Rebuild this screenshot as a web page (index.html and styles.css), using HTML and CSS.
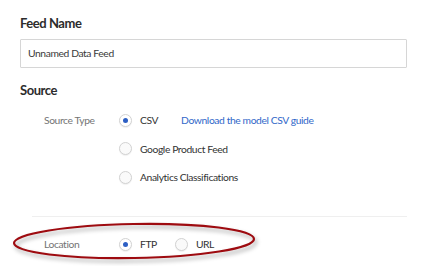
FILE: index.html
```html
<!DOCTYPE html>
<html>
<head>
<meta charset="utf-8">
<link rel="stylesheet" href="styles.css">
</head>
<body>
<div class="page">
  <h2 class="heading">Feed Name</h2>
  <div class="input">Unnamed Data Feed</div>
  <h2 class="heading source">Source</h2>
  <div class="field">
    <div class="label">Source Type</div>
    <div class="options">
      <div class="opt"><span class="radio on"></span><span>CSV</span><a class="link">Download the model CSV guide</a></div>
      <div class="opt"><span class="radio"></span><span>Google Product Feed</span></div>
      <div class="opt"><span class="radio"></span><span>Analytics Classifications</span></div>
    </div>
  </div>
  <div class="sep"></div>
  <div class="field loc">
    <div class="label">Location</div>
    <div class="inline">
      <div class="opt"><span class="radio on"></span><span>FTP</span></div>
      <div class="opt"><span class="radio"></span><span>URL</span></div>
    </div>
  </div>
  <svg class="ring" width="260" height="50" viewBox="0 0 260 50">
    <ellipse cx="123" cy="21" rx="120" ry="17" fill="none" stroke="#9e0b10" stroke-width="2.2" transform="rotate(-1 123 21)"/>
  </svg>
</div>
</body>
</html>
```
FILE: styles.css
```css
* { box-sizing: border-box; }
html, body { margin: 0; background: #fff; }
body { font-family: Lato, "Open Sans", sans-serif; color: #333; }
.page { position: relative; width: 427px; height: 266px; padding: 16px 20px 0 20px; overflow: hidden; }
.heading { margin: 0; font-size: 13px; font-weight: 700; color: #2c2c2c; line-height: 14px; letter-spacing: -0.45px; }
.input { margin-top: 9px; height: 29px; border: 1px solid #d6d6d6; border-radius: 1px; padding: 0 7px; font-size: 10.3px; letter-spacing: -0.4px; line-height: 27px; color: #3a3a3a; }
.source { margin-top: 15px; }
.field { display: flex; }
.label { width: 99px; padding-left: 24px; font-size: 10.3px; letter-spacing: -0.4px; color: #747474; line-height: 14px; }
.options { display: flex; flex-direction: column; gap: 14.5px; margin-top: 16px; }
.source + .field .label { margin-top: 16px; }
.opt { display: flex; align-items: center; height: 14px; font-size: 10.3px; letter-spacing: -0.4px; color: #333; }
.radio { width: 13px; height: 13px; border-radius: 50%; border: 1px solid #d2d2d2; background: #fafafa; margin-right: 8px; position: relative; flex: none; box-shadow: 0 1px 1px rgba(0,0,0,0.06); }
.radio.on { background: #fff; }
.radio.on::after { content: ""; position: absolute; left: 3px; top: 3px; width: 5px; height: 5px; border-radius: 50%; background: #2d5fc4; }
.link { color: #3168c9; margin-left: 23px; }
.sep { margin: 32px 0 0 12px; height: 1px; background: #efefef; }
.loc { margin-top: 20px; }
.inline { display: flex; gap: 18px; }
.ring { position: absolute; left: 11px; top: 220px; filter: drop-shadow(2px 3px 2px rgba(0,0,0,0.35)); }
```
